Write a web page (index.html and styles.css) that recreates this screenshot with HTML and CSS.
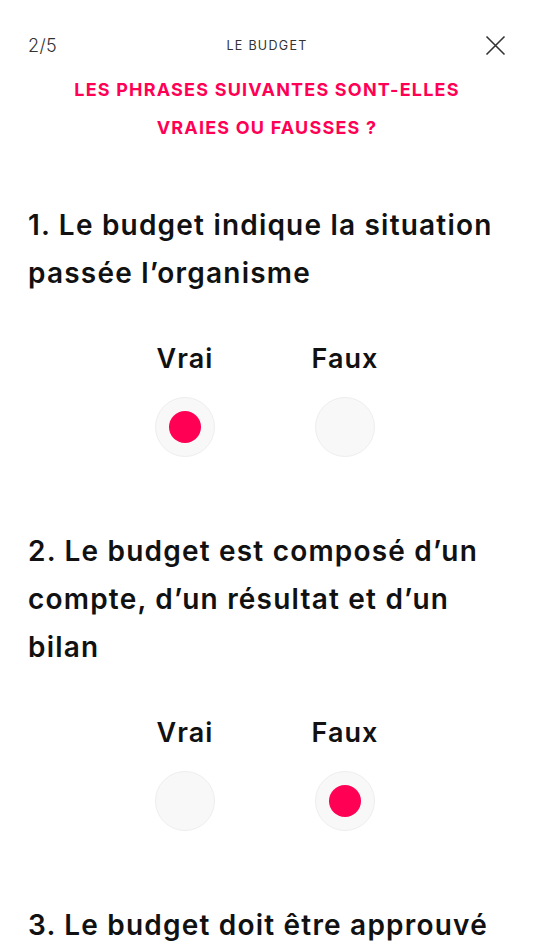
FILE: index.html
```html
<!DOCTYPE html>
<html lang="fr">
<head>
<meta charset="UTF-8">
<meta name="viewport" content="width=device-width, initial-scale=1.0">
<title>Le budget</title>
<link rel="stylesheet" href="styles.css">
</head>
<body>

<div class="screen">
  <div class="header">
    <span class="step">2/5</span>
    <span class="chapter">LE BUDGET</span>
    <button class="close" aria-label="Fermer">
      <svg width="21" height="21" viewBox="0 0 21 21">
        <path d="M1.5 1.5 L19.5 19.5 M19.5 1.5 L1.5 19.5" stroke="#333" stroke-width="1.6" fill="none"/>
      </svg>
    </button>
  </div>

  <h2 class="instruction">LES PHRASES SUIVANTES SONT-ELLES<br>VRAIES OU FAUSSES ?</h2>

  <div class="question">
    <p class="question-text">1. Le budget indique la situation passée l’organisme</p>
    <div class="options">
      <div class="option">
        <span class="option-label">Vrai</span>
        <span class="radio checked"></span>
      </div>
      <div class="option">
        <span class="option-label">Faux</span>
        <span class="radio"></span>
      </div>
    </div>
  </div>

  <div class="question">
    <p class="question-text">2. Le budget est composé d’un compte, d’un résultat et d’un bilan</p>
    <div class="options">
      <div class="option">
        <span class="option-label">Vrai</span>
        <span class="radio"></span>
      </div>
      <div class="option">
        <span class="option-label">Faux</span>
        <span class="radio checked"></span>
      </div>
    </div>
  </div>

  <div class="question">
    <p class="question-text">3. Le budget doit être approuvé</p>
  </div>
</div>

</body>
</html>
```

FILE: styles.css
```css
  body {
    margin: 0;
    background-color: #fff;
    font-family: Inter, "Noto Sans", sans-serif;
    color: #111;
  }
  .screen {
    padding: 0 28px;
  }
  .header {
    display: flex;
    align-items: center;
    justify-content: space-between;
    height: 30px;
    padding-top: 30px;
  }
  .step {
    width: 60px;
    font-size: 18px;
    font-weight: 300;
    letter-spacing: 0.4px;
    color: #333;
  }
  .chapter {
    font-size: 12.5px;
    letter-spacing: 1.3px;
    color: #333;
  }
  .close {
    width: 60px;
    display: flex;
    justify-content: flex-end;
    padding: 0;
    border: none;
    background: none;
  }
  .instruction {
    margin: 11px 0 54px;
    font-size: 18px;
    font-weight: 700;
    letter-spacing: 1.2px;
    line-height: 38px;
    text-align: center;
    color: #ff0055;
  }
  .question {
    margin-bottom: 70px;
  }
  .question:last-child {
    margin-bottom: 0;
  }
  .question-text {
    margin: 0;
    font-size: 28px;
    font-weight: 600;
    letter-spacing: 1.2px;
    line-height: 48px;
  }
  .options {
    display: flex;
    justify-content: center;
    margin-top: 42px;
    padding-right: 4px;
  }
  .option {
    width: 160px;
    display: flex;
    flex-direction: column;
    align-items: center;
  }
  .option-label {
    font-size: 27px;
    font-weight: 600;
    letter-spacing: 1.1px;
    line-height: 40px;
  }
  .radio {
    margin-top: 18px;
    width: 58px;
    height: 58px;
    border-radius: 50%;
    background-color: #f8f8f8;
    border: 1px solid #eee;
    display: flex;
    align-items: center;
    justify-content: center;
  }
  .radio.checked::after {
    content: "";
    width: 32px;
    height: 32px;
    border-radius: 50%;
    background-color: #ff0055;
  }
```
